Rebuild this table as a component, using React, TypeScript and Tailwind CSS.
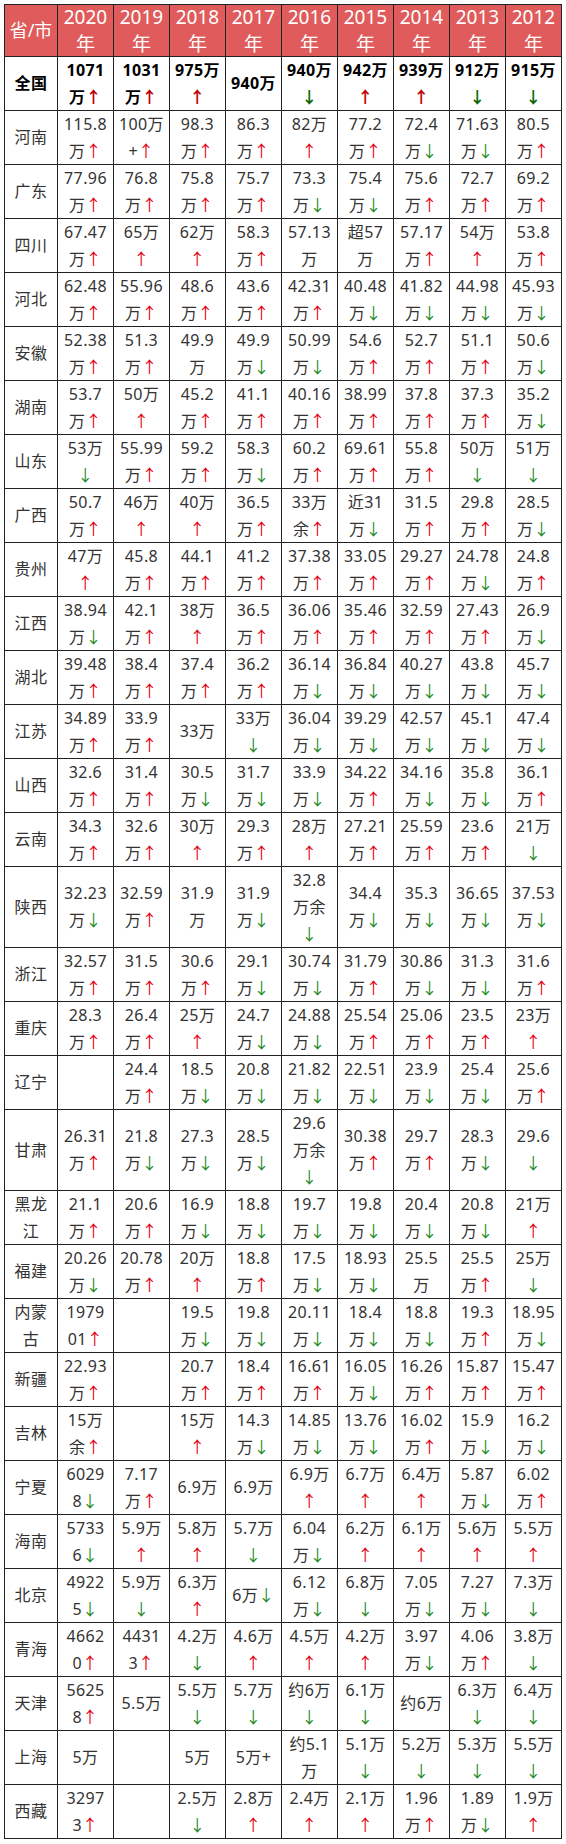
import React from "react";

// 每行: 省份名, 9 個年份的數值 ("|" 表示換行)
interface Row {
  name: string;
  cells: string[];
  tall?: boolean;
  bold?: boolean;
}

const years = ["2020", "2019", "2018", "2017", "2016", "2015", "2014", "2013", "2012"];

const rows: Row[] = [
  { name: "全国", bold: true, cells: ["1071|万↑", "1031|万↑", "975万|↑", "940万", "940万|↓", "942万|↑", "939万|↑", "912万|↓", "915万|↓"] },
  { name: "河南", cells: ["115.8|万↑", "100万|+↑", "98.3|万↑", "86.3|万↑", "82万|↑", "77.2|万↑", "72.4|万↓", "71.63|万↓", "80.5|万↑"] },
  { name: "广东", cells: ["77.96|万↑", "76.8|万↑", "75.8|万↑", "75.7|万↑", "73.3|万↓", "75.4|万↓", "75.6|万↑", "72.7|万↑", "69.2|万↑"] },
  { name: "四川", cells: ["67.47|万↑", "65万|↑", "62万|↑", "58.3|万↑", "57.13|万", "超57|万", "57.17|万↑", "54万|↑", "53.8|万↑"] },
  { name: "河北", cells: ["62.48|万↑", "55.96|万↑", "48.6|万↑", "43.6|万↑", "42.31|万↑", "40.48|万↓", "41.82|万↓", "44.98|万↓", "45.93|万↓"] },
  { name: "安徽", cells: ["52.38|万↑", "51.3|万↑", "49.9|万", "49.9|万↓", "50.99|万↓", "54.6|万↑", "52.7|万↑", "51.1|万↑", "50.6|万↓"] },
  { name: "湖南", cells: ["53.7|万↑", "50万|↑", "45.2|万↑", "41.1|万↑", "40.16|万↑", "38.99|万↑", "37.8|万↑", "37.3|万↑", "35.2|万↓"] },
  { name: "山东", cells: ["53万|↓", "55.99|万↑", "59.2|万↑", "58.3|万↓", "60.2|万↑", "69.61|万↑", "55.8|万↑", "50万|↓", "51万|↓"] },
  { name: "广西", cells: ["50.7|万↑", "46万|↑", "40万|↑", "36.5|万↑", "33万|余↑", "近31|万↓", "31.5|万↑", "29.8|万↑", "28.5|万↓"] },
  { name: "贵州", cells: ["47万|↑", "45.8|万↑", "44.1|万↑", "41.2|万↑", "37.38|万↑", "33.05|万↑", "29.27|万↑", "24.78|万↓", "24.8|万↑"] },
  { name: "江西", cells: ["38.94|万↓", "42.1|万↑", "38万|↑", "36.5|万↑", "36.06|万↑", "35.46|万↑", "32.59|万↑", "27.43|万↑", "26.9|万↓"] },
  { name: "湖北", cells: ["39.48|万↑", "38.4|万↑", "37.4|万↑", "36.2|万↑", "36.14|万↓", "36.84|万↓", "40.27|万↓", "43.8|万↓", "45.7|万↓"] },
  { name: "江苏", cells: ["34.89|万↑", "33.9|万↑", "33万", "33万|↓", "36.04|万↓", "39.29|万↓", "42.57|万↓", "45.1|万↓", "47.4|万↓"] },
  { name: "山西", cells: ["32.6|万↑", "31.4|万↑", "30.5|万↓", "31.7|万↓", "33.9|万↓", "34.22|万↑", "34.16|万↓", "35.8|万↓", "36.1|万↑"] },
  { name: "云南", cells: ["34.3|万↑", "32.6|万↑", "30万|↑", "29.3|万↑", "28万|↑", "27.21|万↑", "25.59|万↑", "23.6|万↑", "21万|↓"] },
  { name: "陕西", tall: true, cells: ["32.23|万↓", "32.59|万↑", "31.9|万", "31.9|万↓", "32.8|万余|↓", "34.4|万↓", "35.3|万↓", "36.65|万↓", "37.53|万↓"] },
  { name: "浙江", cells: ["32.57|万↑", "31.5|万↑", "30.6|万↑", "29.1|万↓", "30.74|万↓", "31.79|万↑", "30.86|万↓", "31.3|万↓", "31.6|万↑"] },
  { name: "重庆", cells: ["28.3|万↑", "26.4|万↑", "25万|↑", "24.7|万↓", "24.88|万↓", "25.54|万↑", "25.06|万↑", "23.5|万↑", "23万|↑"] },
  { name: "辽宁", cells: ["", "24.4|万↑", "18.5|万↓", "20.8|万↓", "21.82|万↓", "22.51|万↓", "23.9|万↓", "25.4|万↓", "25.6|万↑"] },
  { name: "甘肃", tall: true, cells: ["26.31|万↑", "21.8|万↓", "27.3|万↓", "28.5|万↓", "29.6|万余|↓", "30.38|万↑", "29.7|万↑", "28.3|万↓", "29.6|↓"] },
  { name: "黑龙|江", cells: ["21.1|万↑", "20.6|万↑", "16.9|万↓", "18.8|万↓", "19.7|万↓", "19.8|万↓", "20.4|万↓", "20.8|万↓", "21万|↑"] },
  { name: "福建", cells: ["20.26|万↓", "20.78|万↑", "20万|↑", "18.8|万↑", "17.5|万↓", "18.93|万↓", "25.5|万", "25.5|万↑", "25万|↓"] },
  { name: "内蒙|古", cells: ["1979|01↑", "", "19.5|万↓", "19.8|万↓", "20.11|万↓", "18.4|万↓", "18.8|万↓", "19.3|万↑", "18.95|万↓"] },
  { name: "新疆", cells: ["22.93|万↑", "", "20.7|万↑", "18.4|万↑", "16.61|万↑", "16.05|万↓", "16.26|万↑", "15.87|万↑", "15.47|万↑"] },
  { name: "吉林", cells: ["15万|余↑", "", "15万|↑", "14.3|万↓", "14.85|万↓", "13.76|万↓", "16.02|万↑", "15.9|万↓", "16.2|万↓"] },
  { name: "宁夏", cells: ["6029|8↓", "7.17|万↑", "6.9万", "6.9万", "6.9万|↑", "6.7万|↑", "6.4万|↑", "5.87|万↓", "6.02|万↑"] },
  { name: "海南", cells: ["5733|6↓", "5.9万|↑", "5.8万|↑", "5.7万|↓", "6.04|万↓", "6.2万|↑", "6.1万|↑", "5.6万|↑", "5.5万|↑"] },
  { name: "北京", cells: ["4922|5↓", "5.9万|↓", "6.3万|↑", "6万↓", "6.12|万↓", "6.8万|↓", "7.05|万↓", "7.27|万↓", "7.3万|↓"] },
  { name: "青海", cells: ["4662|0↑", "4431|3↑", "4.2万|↓", "4.6万|↑", "4.5万|↑", "4.2万|↑", "3.97|万↓", "4.06|万↑", "3.8万|↓"] },
  { name: "天津", cells: ["5625|8↑", "5.5万", "5.5万|↓", "5.7万|↓", "约6万|↓", "6.1万|↓", "约6万", "6.3万|↓", "6.4万|↓"] },
  { name: "上海", cells: ["5万", "", "5万", "5万+", "约5.1|万", "5.1万|↓", "5.2万|↓", "5.3万|↓", "5.5万|↓"] },
  { name: "西藏", cells: ["3297|3↑", "", "2.5万|↓", "2.8万|↑", "2.4万|↑", "2.1万|↑", "1.96|万↑", "1.89|万↓", "1.9万|↑"] },
];

function Line({ text, bold }: { text: string; bold?: boolean }) {
  const parts = text.split(/([↑↓])/).filter((p) => p !== "");
  return (
    <span className="whitespace-nowrap">
      {parts.map((p, i) =>
        p === "↑" ? (
          <span key={i} className={bold ? "text-[#c00000]" : "text-[#e60012]"}>
            ↑
          </span>
        ) : p === "↓" ? (
          <span key={i} className={bold ? "text-[#0b6b0b]" : "text-[#1e8a1e]"}>
            ↓
          </span>
        ) : (
          <span key={i}>{p}</span>
        )
      )}
    </span>
  );
}

function Cell({ text, bold, tall }: { text: string; bold?: boolean; tall?: boolean }) {
  return (
    <div
      className={`flex flex-col items-center justify-center border-r border-b border-[#222] leading-[27px] tracking-[0.4px] ${
        tall ? "h-[81px]" : "h-[54px]"
      } ${bold ? "font-bold text-black" : "text-[#333]"}`}
    >
      {text.split("|").map((l, i) => (
        <Line key={i} text={l} bold={bold} />
      ))}
    </div>
  );
}

export default function App() {
  return (
    <div className="bg-white min-h-[1844px] pt-[4px] pl-[4px] font-['Noto_Sans','Noto_Sans_CJK_SC',sans-serif] text-[16px]">
      <div className="inline-grid grid-cols-[53px_repeat(9,56px)] border-l border-t border-[#222]">
        {/* 表頭 */}
        <div className="flex h-[52px] items-center justify-center border-r border-b border-[#222] bg-[#e05c5c] text-[18px] text-white">
          省/市
        </div>
        {years.map((y) => (
          <div
            key={y}
            className="flex h-[52px] flex-col items-center justify-center border-r border-b border-[#222] bg-[#e05c5c] text-[19px] leading-[27px] text-white"
          >
            <span>{y}</span>
            <span>年</span>
          </div>
        ))}

        {rows.map((r) => (
          <React.Fragment key={r.name}>
            <Cell text={r.name} bold={r.bold} tall={r.tall} />
            {r.cells.map((c, i) => (
              <Cell key={i} text={c} bold={r.bold} tall={r.tall} />
            ))}
          </React.Fragment>
        ))}
      </div>
    </div>
  );
}
